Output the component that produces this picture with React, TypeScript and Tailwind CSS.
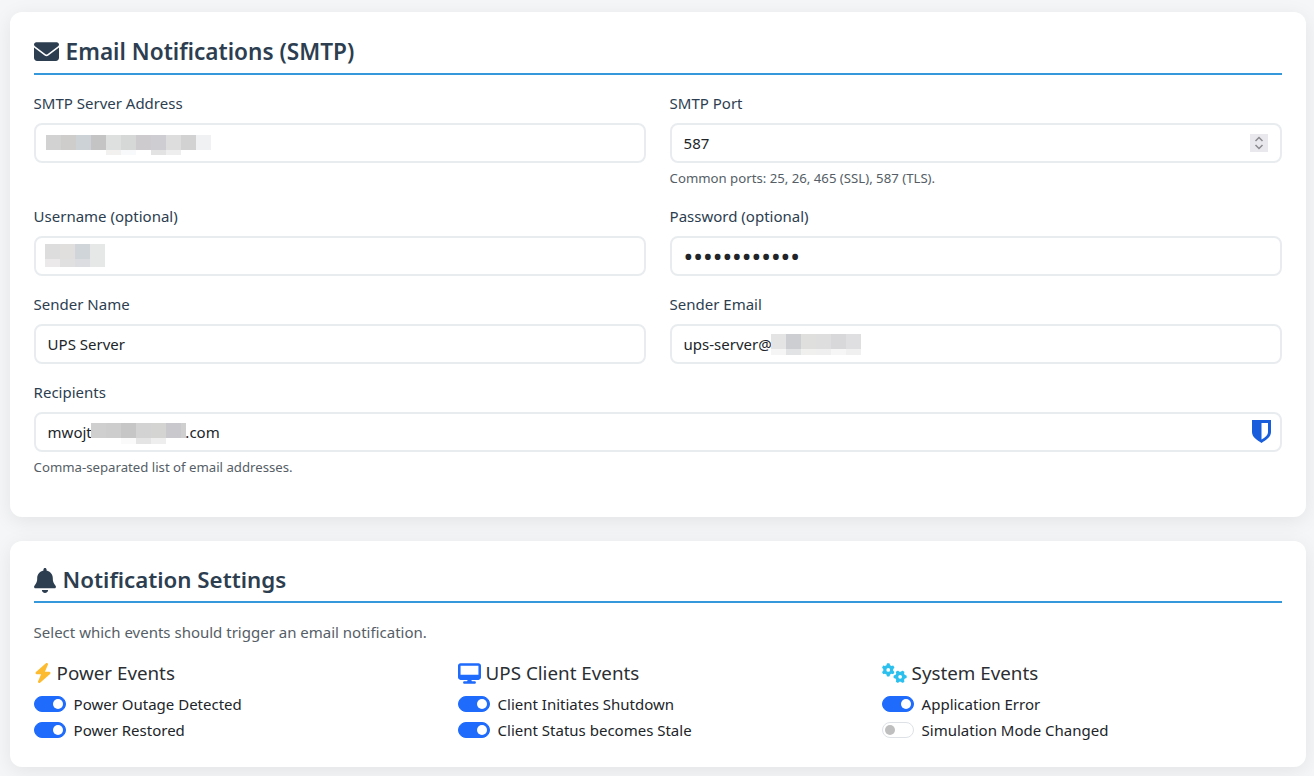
import type { ReactNode } from "react";
import { FaEnvelope, FaBell, FaBolt, FaDesktop, FaGears } from "react-icons/fa6";

type Cell = string | null;
type Mosaic = { rows: Cell[][]; className: string; lowerHeight: number };

function Blur({ rows, className, lowerHeight }: Mosaic) {
  return (
    <div className={`absolute pointer-events-none overflow-hidden ${className}`}>
      {rows.map((row, i) => (
        <div key={i} className="flex" style={{ height: i === 0 ? 15 : lowerHeight }}>
          {row.map((c, j) => (
            <div key={j} className="w-[15px] h-full shrink-0" style={{ background: c ?? "transparent" }} />
          ))}
        </div>
      ))}
    </div>
  );
}

function Field({ label, value, type = "text", hint, blur, extra, dots }: {
  label: string; value: string; type?: string; hint?: string; blur?: Mosaic; extra?: ReactNode; dots?: boolean;
}) {
  return (
    <div className="flex flex-col">
      <label className="text-[15px] leading-[20px] h-[20px] mb-[10px] text-[#2c3e50]">{label}</label>
      <div className="relative">
        <input
          readOnly
          type={type}
          value={value}
          className={`block w-full h-[40px] px-[12px] border-2 border-[#e9ecef] rounded-[8px] bg-white text-[#212529] outline-none ${dots ? "text-[25.800px]" : "text-[15px]"}`}
        />
        {blur && <Blur {...blur} />}
        {extra}
      </div>
      {hint && <p className="mt-[7px] text-[13.200px] leading-[16px] text-[#555e66]">{hint}</p>}
    </div>
  );
}

function Toggle({ on, label }: { on: boolean; label: string }) {
  return (
    <label className="flex items-center h-[26px] gap-[8px] text-[15px] text-[#212529]">
      <span className={`relative block w-[32px] h-[16px] rounded-full border ${on ? "bg-[#1f6bfb] border-[#1f6bfb]" : "bg-white border-[#dee2e6]"}`}>
        <span className={`absolute top-[2px] w-[10px] h-[10px] rounded-full ${on ? "bg-white right-[2px]" : "bg-[#bfbfbf] left-[2px]"}`} />
      </span>
      {label}
    </label>
  );
}

function Group({ icon, title, items }: { icon: ReactNode; title: string; items: [string, boolean][] }) {
  return (
    <div>
      <h3 className="flex items-center gap-[5px] h-[24px] mb-[6px] text-[18.800px] font-normal text-[#2b2f33]">{icon}{title}</h3>
      {items.map(([l, on]) => <Toggle key={l} label={l} on={on} />)}
    </div>
  );
}

function Bitwarden() {
  return (
    <svg viewBox="0 0 19 23" className="absolute right-[11px] top-[8px] w-[19px] h-[23px]">
      <path fill="#175ddc" d="M0 0h19v12c0 5-5 8-9.500 11C5 20 0 17 0 12z" />
      <path fill="#ffffff" d="M9.500 3H16v9c0 3-3 5.500-6.500 7.500z" />
    </svg>
  );
}

export default function App() {
  return (
    <div className="min-h-[776px] bg-[#f4f6f8] pl-[9.600px] pr-[8.400px] pt-[12px] font-['Noto_Sans','Open_Sans',sans-serif]">
      <section className="bg-white rounded-[12px] shadow-[0_4px_20px_rgba(0,0,0,0.08)] px-[24px] pt-[24px] h-[505px]">
        <h2 className="flex items-center gap-[7px] h-[39px] border-b-2 border-[#3498db] pb-[6px] mb-[18px] text-[22.600px] font-semibold text-[#2c3e50]">
          <FaEnvelope className="w-[25px] h-[25px] shrink-0" />Email Notifications (SMTP)
        </h2>
        <div className="grid grid-cols-2 gap-x-[24px]">
          <Field label="SMTP Server Address" value="" blur={{
            className: "left-[12.400px] top-[12px]",
            lowerHeight: 5,
            rows: [
              ["#d2d2d2", "#cfcccc", "#ccd2d6", "#c4c4c4", "#dde0de", "#d5d8d6", "#cdcbce", "#cdcdd2", "#dddddd", "#d2d2d2", "#f0f1f3"],
              [null, null, null, null, "#f3f1ef", "#f8f9fb", null, "#e3e3e4", "#efeeee", null, null],
            ],
          }} />
          <Field label="SMTP Port" value="587" hint="Common ports: 25, 26, 465 (SSL), 587 (TLS)." extra={
            <div className="absolute right-[14px] top-[11px] w-[18px] h-[18px] bg-[#e9e9ed] flex items-center justify-center">
              <svg viewBox="0 0 18 18" className="w-[18px] h-[18px]" fill="none" stroke="#8a8a8f" strokeWidth="1.5">
                <path d="M5.500 7 9 3.500 12.500 7M5.500 11 9 14.500 12.500 11" />
              </svg>
            </div>
          } />
        </div>
        <div className="grid grid-cols-2 gap-x-[24px] mt-[20px]">
          <Field label="Username (optional)" value="" blur={{
            className: "left-[11.400px] top-[8px]",
            lowerHeight: 8,
            rows: [
              ["#dddddd", "#e0dfdd", "#d0d5d9", "#e6e8e7"],
              ["#ebe9e9", "#e0e0e0", "#dbdde0", "#e6e8e7"],
            ],
          }} />
          <Field label="Password (optional)" value="••••••••••••" type="password" dots />
        </div>
        <div className="grid grid-cols-2 gap-x-[24px] mt-[18px]">
          <Field label="Sender Name" value="UPS Server" />
          <Field label="Sender Email" value="ups-server@" blur={{
            className: "left-[101.400px] top-[10px]",
            lowerHeight: 6,
            rows: [
              ["#e4e4e4", "#cdced2", "#dfe0dd", "#dedede", "#d8d8da", "#dfdfe1"],
              ["#f4f5f4", "#e2e3e4", "#f0f1ef", "#efefef", "#f6f6f6", "#f0f0f0"],
            ],
          }} />
        </div>
        <div className="mt-[18px]">
          <Field label="Recipients" value="mwojt                        .com" hint="Comma-separated list of email addresses." extra={<Bitwarden />} blur={{
            className: "left-[57.400px] top-[11px] w-[95px]",
            lowerHeight: 6,
            rows: [
              ["#cfcfcf", "#cdcdcd", "#c6c6c6", "#d3d3d3", "#d4d5d3", "#c9c9cd", "#cfcfcf"],
              [null, null, "#fafafa", "#e4e4e4", "#eeeeee", null, null],
            ],
          }} />
        </div>
      </section>
      <section className="mt-[24px] bg-white rounded-[12px] shadow-[0_4px_20px_rgba(0,0,0,0.08)] px-[24px] pt-[24px] h-[226px]">
        <h2 className="flex items-center gap-[7px] h-[38px] border-b-2 border-[#3498db] pb-[6px] mb-[19px] text-[22.300px] font-semibold text-[#2c3e50]">
          <FaBell className="w-[22px] h-[25px] shrink-0" />Notification Settings
        </h2>
        <p className="text-[15px] leading-[20px] text-[#555e66] mb-[19px]">Select which events should trigger an email notification.</p>
        <div className="grid grid-cols-3 gap-x-[24px]">
          <Group icon={<FaBolt className="w-[18px] h-[20px] text-[#fdbc2f] shrink-0" />} title="Power Events" items={[["Power Outage Detected", true], ["Power Restored", true]]} />
          <Group icon={<FaDesktop className="w-[23px] h-[21px] text-[#1f6bfb] shrink-0" />} title="UPS Client Events" items={[["Client Initiates Shutdown", true], ["Client Status becomes Stale", true]]} />
          <Group icon={<FaGears className="w-[25px] h-[20px] text-[#2bc0ee] shrink-0" />} title="System Events" items={[["Application Error", true], ["Simulation Mode Changed", false]]} />
        </div>
      </section>
    </div>
  );
}
